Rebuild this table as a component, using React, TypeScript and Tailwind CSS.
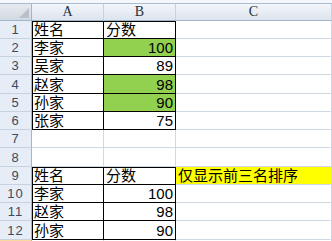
import clsx from "clsx";

type Row = {
  n: number;
  tall?: boolean;
  a?: string;
  b?: string;
  bNum?: boolean;
  green?: boolean;
  c?: string;
  boxed?: boolean;
  topEdge?: boolean;
};

const ROWS: Row[] = [
  { n: 1, a: "姓名", b: "分数", boxed: true, topEdge: true },
  { n: 2, a: "李家", b: "100", bNum: true, green: true, boxed: true },
  { n: 3, a: "吴家", b: "89", bNum: true, boxed: true },
  { n: 4, tall: true, a: "赵家", b: "98", bNum: true, green: true, boxed: true },
  { n: 5, a: "孙家", b: "90", bNum: true, green: true, boxed: true },
  { n: 6, a: "张家", b: "75", bNum: true, boxed: true },
  { n: 7 },
  { n: 8, tall: true },
  { n: 9, a: "姓名", b: "分数", c: "仅显示前三名排序", boxed: true, topEdge: true },
  { n: 10, a: "李家", b: "100", bNum: true, boxed: true },
  { n: 11, a: "赵家", b: "98", bNum: true, boxed: true },
  { n: 12, tall: true, a: "孙家", b: "90", bNum: true, boxed: true },
];

const cellFont = { fontFamily: '"Liberation Sans", "Noto Sans CJK SC", sans-serif' };

function Cell({
  text,
  right,
  boxed,
  first,
  topEdge,
  fill,
  tall,
}: {
  text?: string;
  right?: boolean;
  boxed?: boolean;
  first?: boolean;
  topEdge?: boolean;
  fill?: string;
  tall?: boolean;
}) {
  return (
    <div
      className={clsx(
        "flex items-center overflow-hidden whitespace-nowrap border-b border-r text-[15px] leading-none text-black",
        tall ? "h-[19px]" : "h-[18px]",
        boxed ? "border-black" : "border-[#d0d7e5]",
        right ? "justify-end pr-[2px]" : "justify-start pl-[2px]",
        boxed && first && !topEdge && "shadow-[inset_1px_0_0_#000]",
        boxed && first && topEdge && "shadow-[inset_1px_1px_0_#000]",
        boxed && !first && topEdge && "shadow-[inset_0_1px_0_#000]",
        fill,
      )}
      style={cellFont}
    >
      {text}
    </div>
  );
}

function ColHeader({ label }: { label: string }) {
  return (
    <div
      className="flex h-[17px] items-center justify-center border-b border-r border-b-[#9eb6ce] border-r-[#c5d2e0] bg-gradient-to-b from-[#f3f6fa] to-[#dde4ee] text-[14px] leading-none text-[#27313f]"
      style={{ fontFamily: '"Liberation Serif", serif' }}
    >
      {label}
    </div>
  );
}

export default function App() {
  return (
    <div className="h-[241px] w-[332px] overflow-hidden bg-white">
      {/* strip under the formula bar */}
      <div className="h-[4px] border-b border-[#a9bcd3] bg-[#f4f7fb]" />

      <div className="grid grid-cols-[32px_72px_72px_156px]">
        {/* select-all corner */}
        <div className="relative h-[17px] border-b border-r border-b-[#9eb6ce] border-r-[#9eb6ce] bg-gradient-to-b from-[#e6eaef] to-[#d3d9e1]">
          <div className="absolute bottom-[2px] right-[2px] h-0 w-0 border-b-[10px] border-l-[10px] border-b-[#b7c0cb] border-l-transparent" />
        </div>
        <ColHeader label="A" />
        <ColHeader label="B" />
        <ColHeader label="C" />

        {ROWS.map((r) => (
          <div key={r.n} className="contents">
            <div
              className={clsx(
                "flex items-center justify-center border-b border-r border-b-[#c5d2e0] border-r-[#9eb6ce] bg-[#e6edf6] text-[13px] leading-none tracking-[1px] text-[#3e4a5b]",
                r.tall ? "h-[19px]" : "h-[18px]",
              )}
              style={{ fontFamily: '"Liberation Sans", sans-serif' }}
            >
              {r.n}
            </div>
            <Cell text={r.a} boxed={r.boxed} first topEdge={r.topEdge} tall={r.tall} />
            <Cell
              text={r.b}
              right={r.bNum}
              boxed={r.boxed}
              topEdge={r.topEdge}
              tall={r.tall}
              fill={r.green ? "bg-[#92d050]" : undefined}
            />
            <div
              className={clsx(
                "flex items-center overflow-hidden whitespace-nowrap border-b border-r border-[#d0d7e5] pl-[2px] text-[15px] leading-none text-black",
                r.tall ? "h-[19px]" : "h-[18px]",
                r.c && "bg-[#ffff00]",
              )}
              style={cellFont}
            >
              {r.c}
            </div>
          </div>
        ))}

        {/* row 13, selected header just peeking in */}
        <div className="h-[18px] border-r border-[#9eb6ce] bg-gradient-to-b from-[#f9d99f] to-[#f1c15f]" />
        <div className="h-[18px] border-r border-[#d0d7e5]" />
        <div className="h-[18px] border-r border-[#d0d7e5]" />
        <div className="h-[18px] border-r border-[#d0d7e5]" />
      </div>
    </div>
  );
}
